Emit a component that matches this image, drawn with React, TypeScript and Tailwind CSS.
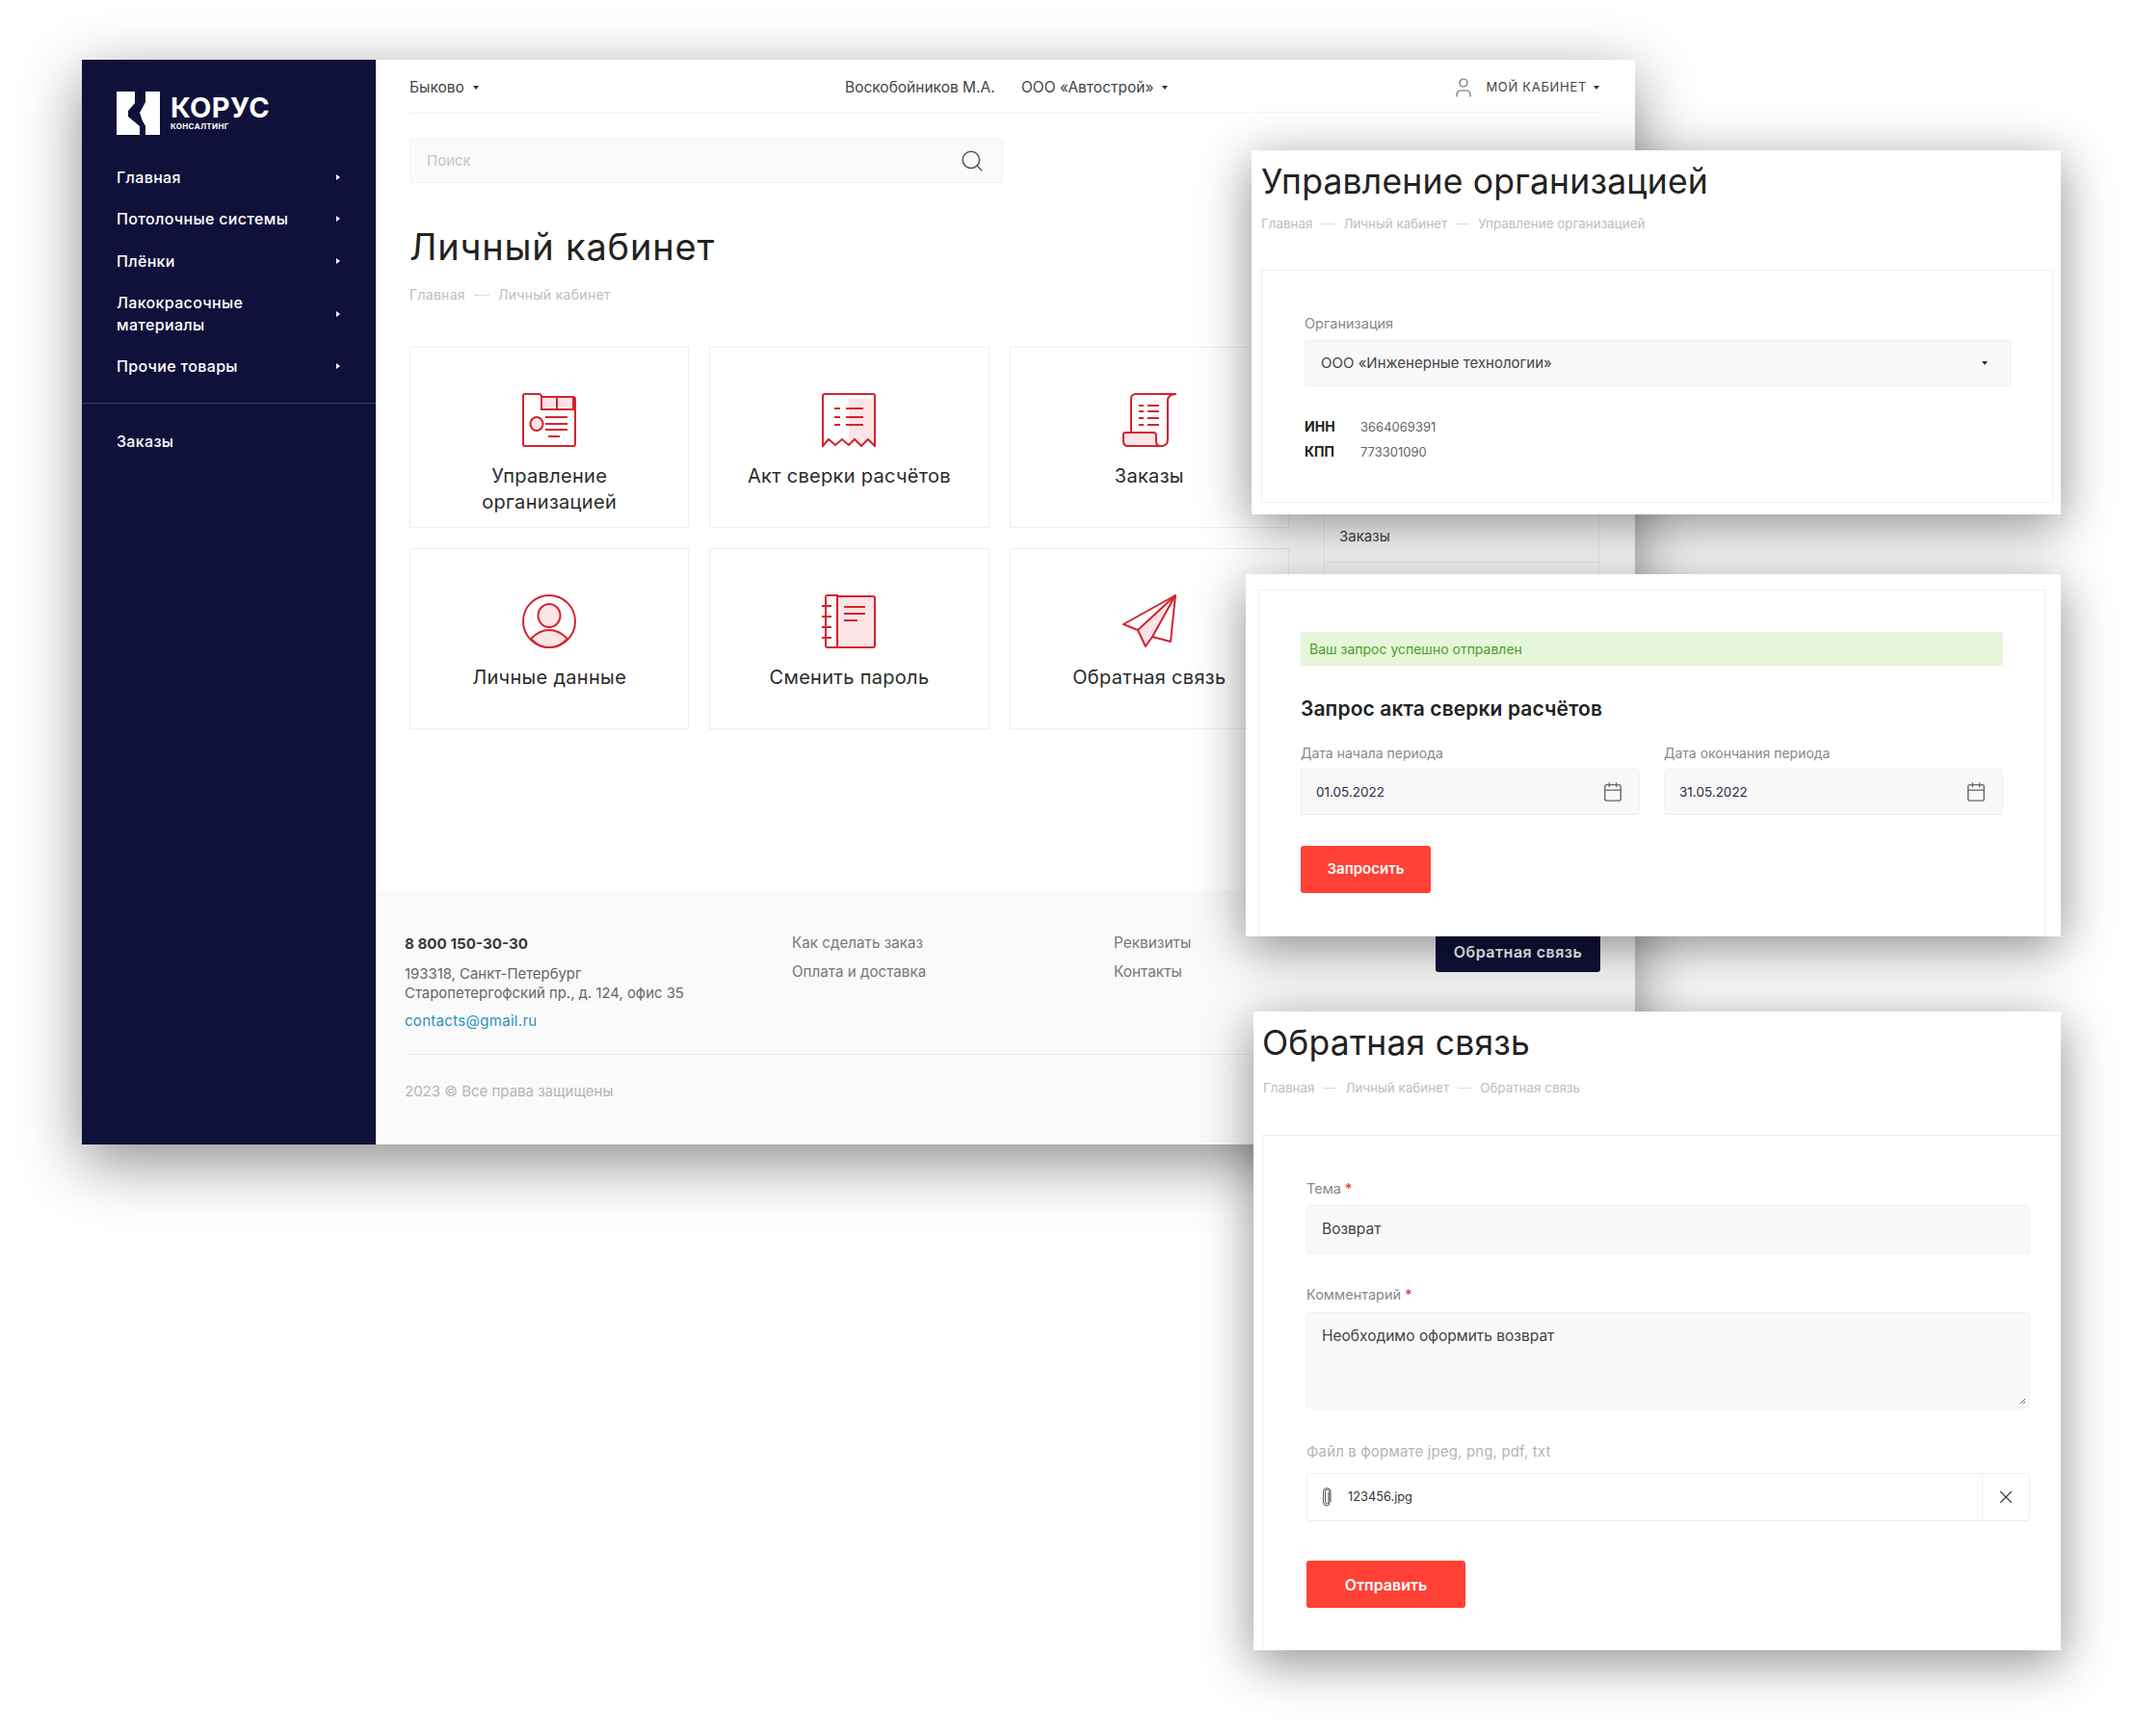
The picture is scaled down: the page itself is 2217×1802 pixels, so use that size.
import { Calendar, Search, User, X } from 'lucide-react';

const RED = '#d3232f';
const PINK = '#fbe4e6';

function Tri({ dir = 'down', color = '#333' }: { dir?: 'down' | 'right'; color?: string }) {
  const points = dir === 'down' ? '0,0 6,0 3,4' : '0,0 4,3 0,6';
  return (
    <svg width={dir === 'down' ? 6 : 4} height={dir === 'down' ? 4 : 6} className="shrink-0">
      <polygon points={points} fill={color} />
    </svg>
  );
}

function Logo() {
  return (
    <div className="flex items-start">
      <svg width="45" height="45" viewBox="0 0 45 45" fill="#fff">
        <path d="M0 0H19V12L12 20V26L24 36V45H0Z" />
        <path d="M30 0H45V45H30V36Q26 30 24 22L30 11Z" />
      </svg>
      <div className="ml-[11px] text-white font-bold">
        <div className="text-[29px] leading-[29px] mt-[2px] tracking-[0.4px]">КОРУС</div>
        <div className="text-[8px] leading-[9px] mt-[1px] tracking-[0.35px]">КОНСАЛТИНГ</div>
      </div>
    </div>
  );
}

function IconOrg() {
  return (
    <svg width="56" height="56" viewBox="0 0 56 56" fill="none" stroke={RED} strokeWidth="2">
      <path d="M20 4H36V17H20ZM36 4H53V17H36Z" fill={PINK} />
      <path d="M3 1H17Q20 1 20 4H52Q55 4 55 6V53Q55 55 53 55H3Q1 55 1 53V3Q1 1 3 1Z" />
      <ellipse cx="15" cy="32" rx="6.5" ry="7" fill={PINK} />
      <path d="M24 25H47M24 32H47M24 38H47M27 45H39" />
    </svg>
  );
}

function IconAct() {
  return (
    <svg width="56" height="56" viewBox="0 0 56 56" fill="none" stroke={RED} strokeWidth="2">
      <path d="M28 6H54V55L48 48L41 55L34 48L28 54Z" fill={PINK} stroke="none" />
      <path d="M1 55V3Q1 1 3 1H53Q55 1 55 3V55L48 48L41 55L34 48L28 54L21 48L14 54L7 48Z" />
      <path d="M13 16H19M25 16H43M13 25H19M25 25H43M13 33H19M25 33H43" />
    </svg>
  );
}

function IconOrders() {
  return (
    <svg width="56" height="56" viewBox="0 0 56 56" fill="none" stroke={RED} strokeWidth="2">
      <path d="M9 41V6Q9 1 14 1H56Q47 1 47 8V48Q47 55 40 55" />
      <path d="M3 41H32Q35 41 35 44V50Q35 55 40 55H6Q1 55 1 50V43Q1 41 3 41Z" fill={PINK} />
      <path d="M17 13H22M26 13H38M17 19H22M26 19H38M17 26H22M26 26H38M17 33H22M26 33H38" />
    </svg>
  );
}

function IconPerson() {
  return (
    <svg width="56" height="56" viewBox="0 0 56 56" fill="none" stroke={RED} strokeWidth="2">
      <circle cx="28" cy="28" r="27" />
      <ellipse cx="28" cy="22" rx="11.5" ry="12" fill={PINK} />
      <path d="M9 46Q18 37 28 37Q38 37 47 46Q39 55 28 55Q17 55 9 46Z" fill={PINK} />
    </svg>
  );
}

function IconPassword() {
  return (
    <svg width="56" height="56" viewBox="0 0 56 56" fill="none" stroke={RED} strokeWidth="2">
      <path d="M16 2H53Q55 2 55 4V53Q55 55 53 55H16Z" fill={PINK} />
      <path d="M16 1H6Q4 1 4 3V53Q4 55 6 55H16V1Z" />
      <path d="M0 12H10M0 23H10M0 34H10M0 45H10" />
      <path d="M23 13H45M23 20H45M23 27H37" />
    </svg>
  );
}

function IconPlane() {
  return (
    <svg width="56" height="56" viewBox="0 0 56 56" fill="none" stroke={RED} strokeWidth="2" strokeLinejoin="round">
      <path d="M55 1L16 37L24 54L31 44Z" fill={PINK} stroke="none" />
      <path d="M55 1L1 31L16 37L24 54L31 44L50 49Z" />
      <path d="M55 1L16 37M55 1L31 44" />
    </svg>
  );
}

function Clip() {
  return (
    <svg width="10" height="20" viewBox="0 0 10 20" fill="none" stroke="#555" strokeWidth="1">
      <path d="M7 5V15Q7 17 5 17Q3.500 17 3.500 15V4Q3.500 2 5 2Q7 2 8 4V15Q8 19 5 19Q1.500 19 1.500 15V4Q1.500 .7 5 .7Q9 .7 9 4V15" />
    </svg>
  );
}

const menu = ['Главная', 'Потолочные системы', 'Плёнки', 'Лакокрасочные материалы', 'Прочие товары'];

const cards = [
  { title: 'Управление организацией', icon: <IconOrg /> },
  { title: 'Акт сверки расчётов', icon: <IconAct /> },
  { title: 'Заказы', icon: <IconOrders /> },
  { title: 'Личные данные', icon: <IconPerson /> },
  { title: 'Сменить пароль', icon: <IconPassword /> },
  { title: 'Обратная связь', icon: <IconPlane /> },
];

function Crumbs({ items, large = false }: { items: string[]; large?: boolean }) {
  return (
    <div className={`flex items-center text-[#bdbdbd] leading-[20px] ${large ? 'text-[14px] tracking-[0.3px]' : 'text-[13.4px]'}`}>
      {items.map((item, i) => (
        <div key={item} className="flex items-center">
          {i > 0 && <div className={`h-px bg-[#dcdcdc] ${large ? 'w-[16px] mx-[9px]' : 'w-[14px] mx-[9px]'}`} />}
          <span>{item}</span>
        </div>
      ))}
    </div>
  );
}

function Sidebar() {
  return (
    <aside className="w-[305px] shrink-0 bg-[#10113a] text-white pt-[33px]">
      <div className="pl-[36px]">
        <Logo />
      </div>
      <nav className="mt-[22px]">
        {menu.map((item) => (
          <div key={item} className="flex items-center justify-between pl-[36px] pr-[37px] py-[10.5px] text-[16px] tracking-[0.33px] leading-[22.5px] font-medium">
            <span className="max-w-[190px]">{item}</span>
            <Tri dir="right" color="#fff" />
          </div>
        ))}
      </nav>
      <div className="h-px bg-[#3a3b60] mt-[16px]" />
      <div className="pl-[36px] mt-[17px] py-[10.5px] text-[16px] tracking-[0.33px] leading-[23px] font-medium">Заказы</div>
    </aside>
  );
}

function TopBar() {
  return (
    <header className="h-[55px] pt-[3px] mr-[37px] flex items-center border-b border-[#f4f4f4] text-[#444] text-[15.5px]">
      <div className="flex items-center gap-[9px] w-[452px]">
        <span>Быково</span>
        <Tri />
      </div>
      <span className="w-[183px]">Воскобойников М.А.</span>
      <div className="flex items-center gap-[9px]">
        <span>ООО «Автострой»</span>
        <Tri />
      </div>
      <div className="ml-auto flex items-center text-[13px] tracking-[0.7px] uppercase">
        <User size={24} strokeWidth={1.2} className="text-[#666] mr-[11px]" />
        <span className="mr-[7px]">Мой кабинет</span>
        <Tri />
      </div>
    </header>
  );
}

function MainWindow() {
  return (
    <div className="absolute left-[85px] top-[62px] w-[1612px] h-[1126px] flex bg-white shadow-[0_18px_60px_rgba(0,0,0,0.45)]">
      <Sidebar />
      <div className="flex-1 flex flex-col min-w-0">
        <div className="flex-1 pl-[35px]">
          <TopBar />
          <div className="mt-[27px] w-[616px] h-[46px] flex items-center justify-between pl-[17px] pr-[18px] bg-[#fafafa] border border-[#f1f1f1] rounded-[3px]">
            <span className="text-[#c4c4c4] text-[15px]">Поиск</span>
            <Search size={26} strokeWidth={1.4} className="text-[#555]" />
          </div>
          <h1 className="mt-[44px] text-[38px] leading-[44px] text-[#222] tracking-[0.8px]">Личный кабинет</h1>
          <div className="mt-[18px]">
            <Crumbs large items={['Главная', 'Личный кабинет']} />
          </div>
          <div className="mt-[44px] flex">
            <div className="w-[913px] grid grid-cols-3 gap-x-[21px] gap-y-[21px]">
              {cards.map((c) => (
                <div key={c.title} className="h-[188px] pt-[47px] border border-[#efefef] flex flex-col items-center text-center">
                  {c.icon}
                  <div className="mt-[17px] w-[230px] text-[20px] tracking-[0.3px] leading-[27px] text-[#2b2b2b]">{c.title}</div>
                </div>
              ))}
            </div>
            <div className="ml-[36px] w-[286px] border-x border-b border-[#efefef] self-start">
              <div className="h-[172px]" />
              <div className="h-[52px] border-b border-[#efefef] pl-[15px] flex items-center text-[15px] text-[#444]">Заказы</div>
              <div className="h-[60px]" />
            </div>
          </div>
        </div>
        <footer className="h-[264px] bg-[#fafafa] pl-[30px] pr-[36px] pt-[44px]">
          <div className="flex items-start h-[127px] border-b border-[#ececec]">
            <div className="w-[402px] text-[14.9px] leading-[20px] text-[#666]">
              <div className="text-[15.2px] leading-[24px] font-bold text-[#3a3a3a]">8 800 150-30-30</div>
              <div className="mt-[9px]">193318, Санкт-Петербург</div>
              <div>Старопетергофский пр., д. 124, офис 35</div>
              <div className="mt-[9px] text-[15px] tracking-[0.3px] text-[#2a8fc0]">contacts@gmail.ru</div>
            </div>
            <div className="w-[334px] mt-px text-[15.2px] leading-[20px] text-[#777] flex flex-col gap-[10px]">
              <span>Как сделать заказ</span>
              <span>Оплата и доставка</span>
            </div>
            <div className="mt-px text-[15.4px] leading-[20px] text-[#777] flex flex-col gap-[10px]">
              <span>Реквизиты</span>
              <span>Контакты</span>
            </div>
            <div className="ml-auto -mt-px w-[171px] h-[42px] flex items-center justify-center bg-[#10113a] rounded-[3px] text-white text-[16px] tracking-[0.5px] font-semibold">
              Обратная связь
            </div>
          </div>
          <div className="mt-[28px] text-[15px] leading-[20px] text-[#b5b5b5]">2023 © Все права защищены</div>
        </footer>
      </div>
    </div>
  );
}

function OrgWindow() {
  return (
    <div className="absolute left-[1299px] top-[156px] w-[840px] h-[378px] bg-white pl-[10px] pr-[8px] pt-[11px] pb-[12px] flex flex-col shadow-[0_12px_50px_rgba(0,0,0,0.45)]">
      <h2 className="text-[35.5px] tracking-[0.2px] leading-[44px] text-[#222]">Управление организацией</h2>
      <div className="mt-[11px]">
        <Crumbs items={['Главная', 'Личный кабинет', 'Управление организацией']} />
      </div>
      <div className="flex-1 mt-[38px] border border-[#efefef] pl-[44px] pr-[43px] pt-[45px]">
        <div className="text-[14.5px] leading-[20px] text-[#888]">Организация</div>
        <div className="mt-[7px] h-[48px] flex items-center justify-between pl-[16px] pr-[23px] bg-[#f9f9f9] border border-[#f1f1f1] rounded-[3px] text-[15px] text-[#444]">
          <span>ООО «Инженерные технологии»</span>
          <Tri />
        </div>
        <div className="mt-[32px] grid grid-cols-[58px_1fr] gap-y-[6px] text-[14px] leading-[20px]">
          <span className="font-bold text-[#222]">ИНН</span>
          <span className="text-[13px] text-[#666]">3664069391</span>
          <span className="font-bold text-[#222]">КПП</span>
          <span className="text-[13px] text-[#666]">773301090</span>
        </div>
      </div>
    </div>
  );
}

function DateField({ label, value }: { label: string; value: string }) {
  return (
    <div className="flex-1">
      <div className="text-[14px] leading-[20px] text-[#888]">{label}</div>
      <div className="mt-[6px] h-[48px] flex items-center justify-between pl-[15px] pr-[16px] bg-[#f8f8f8] border border-[#f0f0f0] rounded-[3px] text-[13.5px] text-[#2a2b48]">
        <span>{value}</span>
        <Calendar size={22} strokeWidth={1.5} className="text-[#666]" />
      </div>
    </div>
  );
}

function RequestWindow() {
  return (
    <div className="absolute left-[1293px] top-[596px] w-[846px] h-[376px] bg-white pl-[13px] pr-[16px] pt-[16px] flex flex-col shadow-[0_12px_50px_rgba(0,0,0,0.45)]">
      <div className="flex-1 border border-[#efefef] pl-[43px] pr-[43px] pt-[43px]">
        <div className="h-[35px] flex items-center pl-[9px] bg-[#e6f6da] rounded-[3px] text-[14px] text-[#4b9e1e]">
          Ваш запрос успешно отправлен
        </div>
        <div className="mt-[30px] text-[21px] tracking-[0.1px] leading-[30px] font-semibold text-[#222]">Запрос акта сверки расчётов</div>
        <div className="mt-[21px] flex gap-[25px]">
          <DateField label="Дата начала периода" value="01.05.2022" />
          <DateField label="Дата окончания периода" value="31.05.2022" />
        </div>
        <div className="mt-[32px] w-[135px] h-[49px] flex items-center justify-center bg-[#ff4136] rounded-[3px] text-white text-[15px] font-semibold">
          Запросить
        </div>
      </div>
    </div>
  );
}

function Req({ text }: { text: string }) {
  return (
    <div className="text-[14.5px] leading-[20px] text-[#888]">
      {text} <span className="text-[#e0313b]">*</span>
    </div>
  );
}

function FeedbackWindow() {
  return (
    <div className="absolute left-[1301px] top-[1050px] w-[838px] h-[663px] bg-white pl-[9px] pt-[11px] flex flex-col shadow-[0_12px_50px_rgba(0,0,0,0.45)]">
      <h2 className="text-[35.5px] leading-[44px] text-[#222] tracking-[0.2px]">Обратная связь</h2>
      <div className="mt-[14px] ml-px">
        <Crumbs items={['Главная', 'Личный кабинет', 'Обратная связь']} />
      </div>
      <div className="flex-1 mt-[39px] border-l border-t border-[#efefef] pl-[45px] pr-[32px] pt-[45px]">
        <Req text="Тема" />
        <div className="mt-[7px] h-[50px] flex items-center pl-[15px] bg-[#f9f9f9] border border-[#f1f1f1] rounded-[3px] text-[15.5px] text-[#444]">
          Возврат
        </div>
        <div className="mt-[33px]">
          <Req text="Комментарий" />
        </div>
        <div className="relative mt-[8px] h-[100px] pl-[15px] pt-[13px] bg-[#f9f9f9] border border-[#f1f1f1] rounded-[3px] text-[15.5px] leading-[22px] text-[#444]">
          Необходимо оформить возврат
          <svg width="7" height="7" viewBox="0 0 7 7" className="absolute right-[3px] bottom-[3px]" stroke="#666" strokeWidth="1">
            <path d="M1 6L6 1M4 6L6 4" />
          </svg>
        </div>
        <div className="mt-[35px] text-[15px] tracking-[0.15px] leading-[20px] text-[#b5b5b5]">Файл в формате jpeg, png, pdf, txt</div>
        <div className="mt-[12px] h-[50px] flex items-center border border-[#efefef] rounded-[3px]">
          <div className="flex-1 flex items-center pl-[15px] gap-[17px] text-[12.8px] text-[#333]">
            <Clip />
            <span>123456.jpg</span>
          </div>
          <div className="w-[49px] h-full flex items-center justify-center border-l border-[#efefef]">
            <X size={22} strokeWidth={1.2} className="text-[#333]" />
          </div>
        </div>
        <div className="mt-[41px] w-[165px] h-[49px] flex items-center justify-center bg-[#ff4136] rounded-[3px] text-white text-[16px] font-semibold">
          Отправить
        </div>
      </div>
    </div>
  );
}

export default function App() {
  return (
    <div className="relative w-[2217px] h-[1802px] overflow-hidden bg-white font-['Inter','Noto_Sans',sans-serif]">
      <MainWindow />
      <OrgWindow />
      <RequestWindow />
      <FeedbackWindow />
    </div>
  );
}
